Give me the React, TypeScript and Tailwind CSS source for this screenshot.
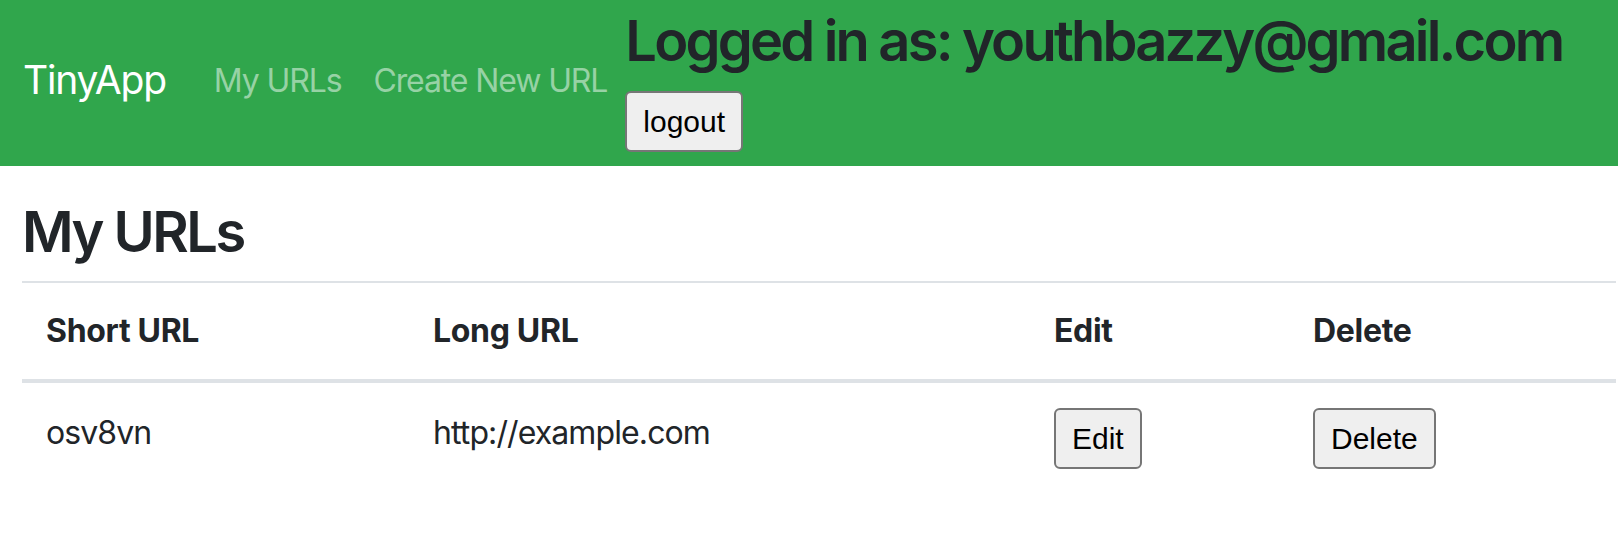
import React from "react";

const sans = "font-['Inter','Noto_Sans',sans-serif]";
const btn =
  "font-['Liberation_Sans',Arial,sans-serif] text-[30px] leading-[35px] text-black bg-[#efefef] border-2 border-[#767676] rounded-[6px] px-[16px] py-[11px] whitespace-nowrap tracking-normal";

export default function App() {
  return (
    <div className={`${sans} w-[1618px] h-[540px] bg-white text-[#212529] overflow-hidden`}>
      <nav className="h-[166px] bg-[#30a64c] flex items-center pl-[23px] whitespace-nowrap">
        <a className="shrink-0 text-white text-[39px] leading-[58px] tracking-[-0.03em] mr-[32px] pb-[6px]">TinyApp</a>
        <div className="shrink-0 flex items-center pb-[4px]">
          <a className="text-[#97d2a5] text-[32px] leading-[48px] tracking-[-0.035em] px-[16px]">My URLs</a>
          <a className="text-[#97d2a5] text-[32px] leading-[48px] tracking-[-0.035em] px-[16px]">Create New URL</a>
        </div>
        <div className="shrink-0 flex flex-col items-start self-start pt-[8px] ml-[2px]">
          <h3 className="text-[56px] leading-[67px] font-semibold tracking-[-0.05em] text-[#212529] mb-[16px]">
            Logged in as: youthbazzy@gmail.com
          </h3>
          <button className={btn}>logout</button>
        </div>
      </nav>
      <main className="pl-[22px] pt-[33px]">
        <h1 className="text-[56px] leading-[67px] font-semibold tracking-[-0.045em] mb-[15px]">My URLs</h1>
        <table className="w-[1594px] table-fixed border-collapse text-[32px] leading-[48px] tracking-[-0.028em]">
          <thead>
            <tr className="border-t-2 border-[#dee2e6]">
              <th className="w-[387px] text-left font-bold tracking-[-0.01em] p-[24px] border-b-4 border-[#dee2e6]">Short URL</th>
              <th className="w-[621px] text-left font-bold tracking-[-0.01em] p-[24px] border-b-4 border-[#dee2e6]">Long URL</th>
              <th className="w-[259px] text-left font-bold tracking-[-0.01em] p-[24px] border-b-4 border-[#dee2e6]">Edit</th>
              <th className="text-left font-bold tracking-[-0.01em] p-[24px] border-b-4 border-[#dee2e6]">Delete</th>
            </tr>
          </thead>
          <tbody>
            <tr>
              <td className="px-[24px] pt-[26px] pb-[24px] align-top">osv8vn</td>
              <td className="px-[24px] pt-[26px] pb-[24px] align-top">http://example.com</td>
              <td className="px-[24px] pt-[25px] align-top">
                <button className={btn}>Edit</button>
              </td>
              <td className="px-[24px] pt-[25px] align-top">
                <button className={btn}>Delete</button>
              </td>
            </tr>
          </tbody>
        </table>
      </main>
    </div>
  );
}
